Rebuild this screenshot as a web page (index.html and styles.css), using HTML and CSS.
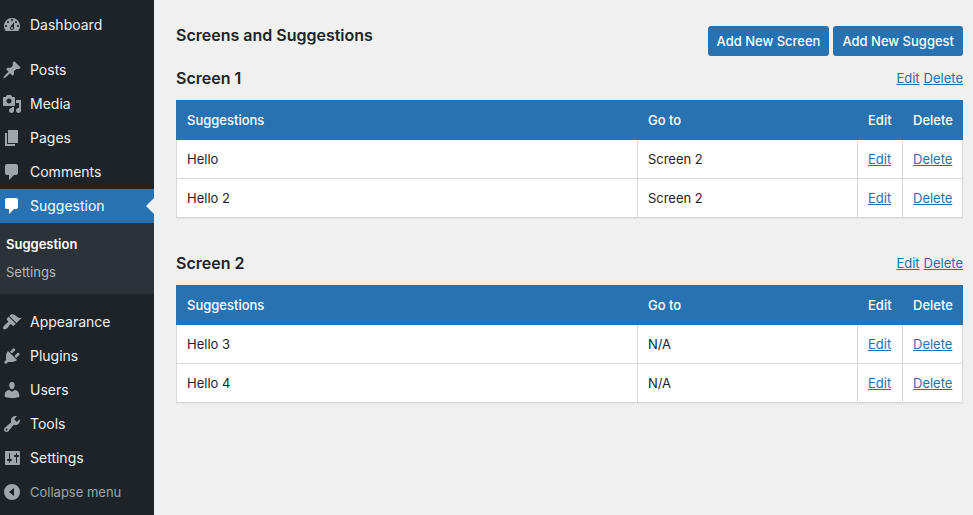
FILE: index.html
```html
<!DOCTYPE html>
<html lang="en">
<head>
<meta charset="utf-8">
<title>Screens and Suggestions</title>
<link rel="stylesheet" href="styles.css">
</head>
<body>
<nav class="sidebar">
  <ul class="menu">
    <li><a class="menu-item" href="#"><svg class="icon" viewBox="0 0 20 20"><path d="M3.76 16h12.48A7.998 7.998 0 0 0 10 3a7.998 7.998 0 0 0-6.24 13zM10 4c.55 0 1 .45 1 1s-.45 1-1 1-1-.45-1-1 .45-1 1-1zM6 6c.55 0 1 .45 1 1s-.45 1-1 1-1-.45-1-1 .45-1 1-1zm8 0c.55 0 1 .45 1 1s-.45 1-1 1-1-.45-1-1 .45-1 1-1zm-5.37 5.55L12 7v6c0 1.1-.9 2-2 2s-2-.9-2-2c0-.57.24-1.08.63-1.45zM4 10c.55 0 1 .45 1 1s-.45 1-1 1-1-.45-1-1 .45-1 1-1zm12 0c.55 0 1 .45 1 1s-.45 1-1 1-1-.45-1-1 .45-1 1-1zm-5 3c0-.55-.45-1-1-1s-1 .45-1 1 .45 1 1 1 1-.45 1-1z"/></svg>Dashboard</a></li>
  </ul>
  <ul class="menu">
    <li><a class="menu-item" href="#"><svg class="icon" viewBox="0 0 20 20"><path d="M10.44 3.02l1.82-1.82 6.36 6.35-1.83 1.82c-1.05-.68-2.48-.57-3.41.36l-.75.75c-.92.93-1.04 2.35-.35 3.41l-1.83 1.82-2.41-2.41-2.8 2.79c-.42.42-3.38 2.71-3.8 2.29s1.86-3.39 2.28-3.81l2.79-2.79L4.1 9.36l1.83-1.82c1.05.69 2.48.57 3.4-.36l.75-.75c.93-.92 1.05-2.35.36-3.41z"/></svg>Posts</a></li>
    <li><a class="menu-item" href="#"><svg class="icon" viewBox="0 0 20 20"><path d="M13 11V4c0-.55-.45-1-1-1h-1.67L9 1H5L3.67 3H2c-.55 0-1 .45-1 1v7c0 .55.45 1 1 1h10c.55 0 1-.45 1-1zM7 4.5c1.38 0 2.5 1.12 2.5 2.5S8.38 9.5 7 9.5 4.5 8.38 4.5 7 5.62 4.5 7 4.5zM14 6h5v10.5c0 1.38-1.12 2.5-2.5 2.5S14 17.88 14 16.5s1.12-2.5 2.5-2.5c.17 0 .34.02.5.05V9h-3V6zm-4 8.05V13h2v3.5c0 1.38-1.12 2.5-2.5 2.5S7 17.88 7 16.5 8.12 14 9.5 14c.17 0 .34.02.5.05z"/></svg>Media</a></li>
    <li><a class="menu-item" href="#"><svg class="icon" viewBox="0 0 20 20"><path d="M6 15V2h10v13H6zm-1 1h8v2H3V5h2v11z"/></svg>Pages</a></li>
    <li><a class="menu-item" href="#"><svg class="icon" viewBox="0 0 20 20"><path d="M5 2h9c1.1 0 2 .9 2 2v7c0 1.1-.9 2-2 2h-2l-5 5v-5H5c-1.1 0-2-.9-2-2V4c0-1.1.9-2 2-2z"/></svg>Comments</a></li>
    <li><a class="menu-item current" href="#"><svg class="icon" viewBox="0 0 20 20"><path d="M5 2h9c1.1 0 2 .9 2 2v7c0 1.1-.9 2-2 2h-2l-5 5v-5H5c-1.1 0-2-.9-2-2V4c0-1.1.9-2 2-2z"/></svg>Suggestion</a>
      <ul class="submenu">
        <li><a class="submenu-item active" href="#">Suggestion</a></li>
        <li><a class="submenu-item" href="#">Settings</a></li>
      </ul>
    </li>
  </ul>
  <ul class="menu">
    <li><a class="menu-item" href="#"><svg class="icon" viewBox="0 0 20 20"><path d="M14.48 11.06L7.41 3.99l1.5-1.5c.5-.56 2.3-.47 3.51.32 1.21.8 1.43 1.28 2.91 2.1 1.18.64 2.45 1.26 4.45.85zm-.71.71L6.7 4.7 4.93 6.47c-.39.39-.39 1.02 0 1.41l1.06 1.06c.39.39.39 1.03 0 1.42-.6.6-1.43 1.11-2.21 1.69-.35.26-.7.53-1.01.84C1.43 14.23.4 16.08 1.4 17.07c.99 1 2.84-.03 4.18-1.36.31-.31.58-.66.85-1.02.57-.78 1.08-1.61 1.69-2.21.39-.39 1.02-.39 1.41 0l1.06 1.06c.39.39 1.02.39 1.41 0z"/></svg>Appearance</a></li>
    <li><a class="menu-item" href="#"><svg class="icon" viewBox="0 0 20 20"><path d="M13.11 4.36L9.87 7.6 8 5.73l3.24-3.24c.35-.34 1.05-.2 1.56.32.52.51.66 1.21.31 1.55zm-8 1.77l.91-1.12 9.01 9.01-1.19.84c-.71.71-2.63 1.16-3.82 1.16H6.14L4.9 17.26c-.59.59-1.54.59-2.12 0-.59-.58-.59-1.53 0-2.12l1.24-1.24v-3.88c0-1.13.4-3.19 1.09-3.89zm7.26 3.97l3.24-3.24c.34-.35 1.04-.21 1.55.31.52.51.66 1.21.31 1.55l-3.24 3.25z"/></svg>Plugins</a></li>
    <li><a class="menu-item" href="#"><svg class="icon" viewBox="0 0 20 20"><path d="M10 9.25c-2.27 0-2.73-3.44-2.73-3.44C7 4.02 7.82 2 9.97 2c2.16 0 2.98 2.02 2.71 3.81 0 0-.41 3.44-2.68 3.44zm0 2.57L12.72 10c2.39 0 4.52 2.33 4.52 4.53v2.49s-3.65 1.13-7.24 1.13c-3.65 0-7.24-1.13-7.24-1.13v-2.49c0-2.25 1.94-4.48 4.47-4.48z"/></svg>Users</a></li>
    <li><a class="menu-item" href="#"><svg class="icon" viewBox="0 0 20 20"><path d="M16.68 9.77c-1.34 1.34-3.3 1.67-4.95.99l-5.41 6.52c-.99.99-2.59.99-3.58 0s-.99-2.59 0-3.57l6.52-5.42c-.68-1.65-.35-3.61.99-4.95 1.28-1.28 3.12-1.62 4.72-1.06l-2.89 2.89 2.82 2.82 2.86-2.87c.53 1.58.18 3.39-1.08 4.65zM3.81 16.21c.4.39 1.04.39 1.43 0 .4-.4.4-1.04 0-1.43-.39-.4-1.03-.4-1.43 0-.39.39-.39 1.03 0 1.43z"/></svg>Tools</a></li>
    <li><a class="menu-item" href="#"><svg class="icon" viewBox="0 0 20 20"><path d="M18 16V4c0-.55-.45-1-1-1H4c-.55 0-1 .45-1 1v12c0 .55.45 1 1 1h13c.55 0 1-.45 1-1zM8 11h1c.55 0 1 .45 1 1s-.45 1-1 1H8v1.500c0 .28-.22.5-.5.5s-.5-.22-.5-.5V13H6c-.55 0-1-.45-1-1s.45-1 1-1h1V5.500c0-.28.22-.5.5-.5s.5.22.5.5V11zm6-2h-1c-.55 0-1-.45-1-1s.45-1 1-1h1V5.500c0-.28.22-.5.5-.5s.5.22.5.5V7h1c.55 0 1 .45 1 1s-.45 1-1 1h-1v5.500c0 .28-.22.5-.5.5s-.5-.22-.5-.5V9z"/></svg>Settings</a></li>
    <li><button class="menu-item collapse" type="button"><svg class="icon" viewBox="0 0 20 20"><path fill-rule="evenodd" d="M10 2a8 8 0 1 0 0 16 8 8 0 0 0 0-16zM12 6v8l-5-4z"/></svg>Collapse menu</button></li>
  </ul>
</nav>
<main class="content">
  <header class="page-head">
    <h1 class="title">Screens and Suggestions</h1>
    <div class="actions">
      <button class="button" type="button">Add New Screen</button>
      <button class="button" type="button">Add New Suggest</button>
    </div>
  </header>
  <section class="screen">
    <div class="screen-head">
      <h2 class="title">Screen 1</h2>
      <div class="actions"><a href="#">Edit</a><a href="#">Delete</a></div>
    </div>
    <table class="list">
      <thead><tr><th>Suggestions</th><th class="goto">Go to</th><th class="edit">Edit</th><th class="delete">Delete</th></tr></thead>
      <tbody>
        <tr><td>Hello</td><td>Screen 2</td><td><a href="#">Edit</a></td><td><a href="#">Delete</a></td></tr>
        <tr><td>Hello 2</td><td>Screen 2</td><td><a href="#">Edit</a></td><td><a href="#">Delete</a></td></tr>
      </tbody>
    </table>
  </section>
  <section class="screen">
    <div class="screen-head">
      <h2 class="title">Screen 2</h2>
      <div class="actions"><a href="#">Edit</a><a href="#">Delete</a></div>
    </div>
    <table class="list">
      <thead><tr><th>Suggestions</th><th class="goto">Go to</th><th class="edit">Edit</th><th class="delete">Delete</th></tr></thead>
      <tbody>
        <tr><td>Hello 3</td><td>N/A</td><td><a href="#">Edit</a></td><td><a href="#">Delete</a></td></tr>
        <tr><td>Hello 4</td><td>N/A</td><td><a href="#">Edit</a></td><td><a href="#">Delete</a></td></tr>
      </tbody>
    </table>
  </section>
</main>
</body>
</html>
```
FILE: styles.css
```css
* {
  box-sizing: border-box;
}

body {
  margin: 0;
  min-height: 100vh;
  display: flex;
  background: #f0f0f0;
  color: #1d2327;
  font: 13px/18px Inter, "Liberation Sans", sans-serif;
}

a {
  color: #2271b1;
}

ul {
  margin: 0;
  padding: 0;
  list-style: none;
}

.sidebar {
  flex: 0 0 154px;
  display: flex;
  flex-direction: column;
  gap: 11px;
  padding-top: 8px;
  background: #1d2327;
}

.menu-item {
  position: relative;
  display: flex;
  align-items: center;
  gap: 8px;
  width: 100%;
  padding: 7px 2px;
  border: 0;
  background: none;
  color: #f0f0f1;
  font: 14px/20px Inter, "Liberation Sans", sans-serif;
  text-decoration: none;
}

.icon {
  width: 20px;
  height: 20px;
  fill: #a0a5aa;
}

.current {
  background: #2872b1;
  color: #fff;
}

.current .icon {
  fill: #fff;
}

.current::after {
  content: "";
  position: absolute;
  right: 0;
  top: 9px;
  border: 8px solid transparent;
  border-left: 0;
  border-right-color: #f0f0f0;
}

.submenu {
  padding: 7px 0 8px;
  background: #2c3338;
}

.submenu-item {
  display: block;
  padding: 5px 6px;
  color: #b3b7bb;
  text-decoration: none;
}

.active {
  color: #fff;
  font-weight: 600;
}

.collapse {
  color: #a0a5aa;
  font-size: 13px;
}

.content {
  flex: 1;
  min-width: 0;
  padding: 20px 10px 20px 22px;
}

.page-head,
.screen-head {
  display: flex;
  justify-content: space-between;
}

.page-head {
  margin-bottom: 7px;
}

.page-head .actions {
  padding-top: 6px;
}

.screen-head {
  align-items: center;
  margin-bottom: 7px;
}

.title {
  margin: 0;
  font-size: 16px;
  line-height: 30px;
  font-weight: 600;
}

.actions {
  display: flex;
  gap: 4px;
}

.button {
  height: 30px;
  padding: 0 9px;
  border: 0;
  border-radius: 3px;
  background: #2872b1;
  color: #fff;
  font: 500 13px/30px Inter, "Liberation Sans", sans-serif;
}

.screen {
  margin-bottom: 30px;
}

.list {
  width: 100%;
  table-layout: fixed;
  border-collapse: collapse;
  background: #fff;
  box-shadow: 0 1px 1px rgba(0, 0, 0, 0.04);
}

.list th,
.list td {
  padding: 10px;
  text-align: left;
}

.list th {
  background: #2872b1;
  color: #fff;
  font-weight: 500;
  border: 1px solid #2872b1;
}

.list td {
  border: 1px solid #d8d8d9;
}

.goto {
  width: 28%;
}

.edit {
  width: 45px;
}

.delete {
  width: 60px;
}
```
